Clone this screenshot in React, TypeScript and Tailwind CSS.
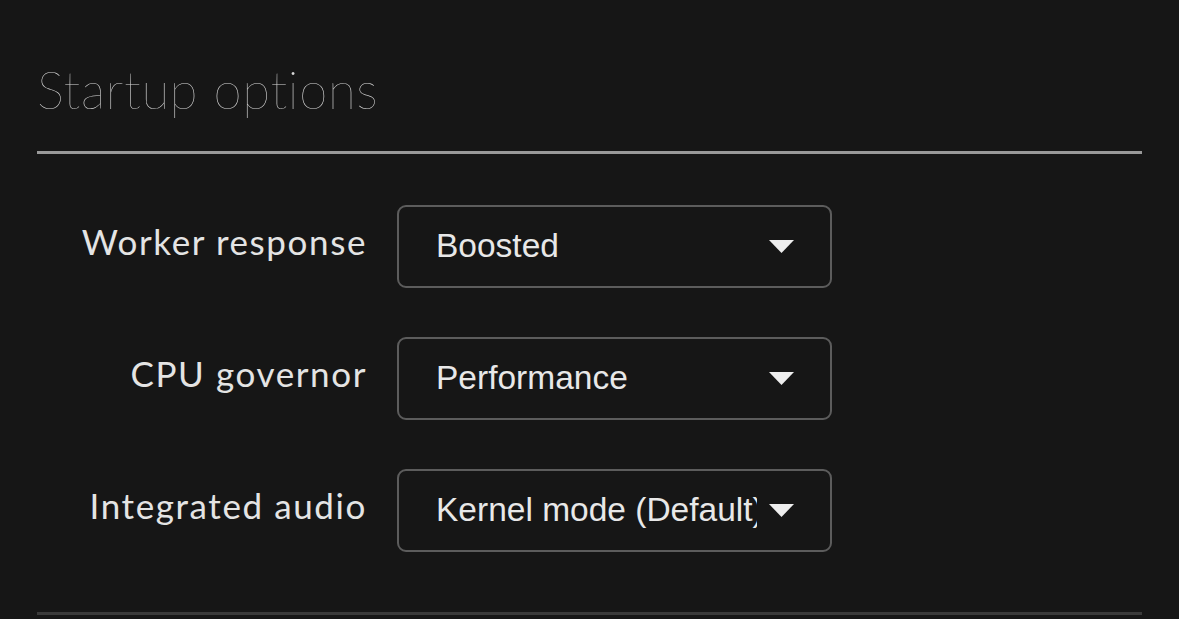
import React from "react";

const rows = [
  { label: "Worker response", value: "Boosted" },
  { label: "CPU governor", value: "Performance" },
  { label: "Integrated audio", value: "Kernel mode (Default)" },
];

function Caret() {
  return (
    <svg width="25" height="13" viewBox="0 0 25 13" className="shrink-0">
      <path d="M0 0 H25 L12.5 13 Z" fill="#eeeeee" />
    </svg>
  );
}

export default function App() {
  return (
    <div className="w-[1179px] h-[619px] overflow-hidden bg-[#161616] pl-[37px] pr-[37px]">
      <div className="pt-[58px] h-[151px]">
        <h1
          className="text-[51px] leading-[64px] text-[#d8d8d8] tracking-[0.7px]"
          style={{ fontFamily: "Lato, sans-serif", fontWeight: 200 }}
        >
          Startup options
        </h1>
      </div>
      <div className="h-[3px] bg-[#999999]" />
      <div className="flex flex-col gap-[49px] pt-[51px] h-[458px]">
        {rows.map((r) => (
          <div key={r.label} className="flex items-center">
            <div
              className="w-[330px] text-right text-[35px] text-[#e4e4e4] pb-[10px] tracking-[1.6px] font-['Lato',sans-serif]"
            >
              {r.label}
            </div>
            <div className="ml-[30px] w-[435px] h-[83px] border-2 border-[#5c5c5c] rounded-[9px] flex items-center pl-[37px] pr-[36px] gap-[12px]">
              <span className="flex-1 overflow-hidden whitespace-nowrap text-[33.5px] text-[#e8e8e8] font-['Liberation_Sans',Arial,sans-serif]">
                {r.value}
              </span>
              <Caret />
            </div>
          </div>
        ))}
      </div>
      <div className="h-[3px] bg-[#3a3a3a]" />
    </div>
  );
}
